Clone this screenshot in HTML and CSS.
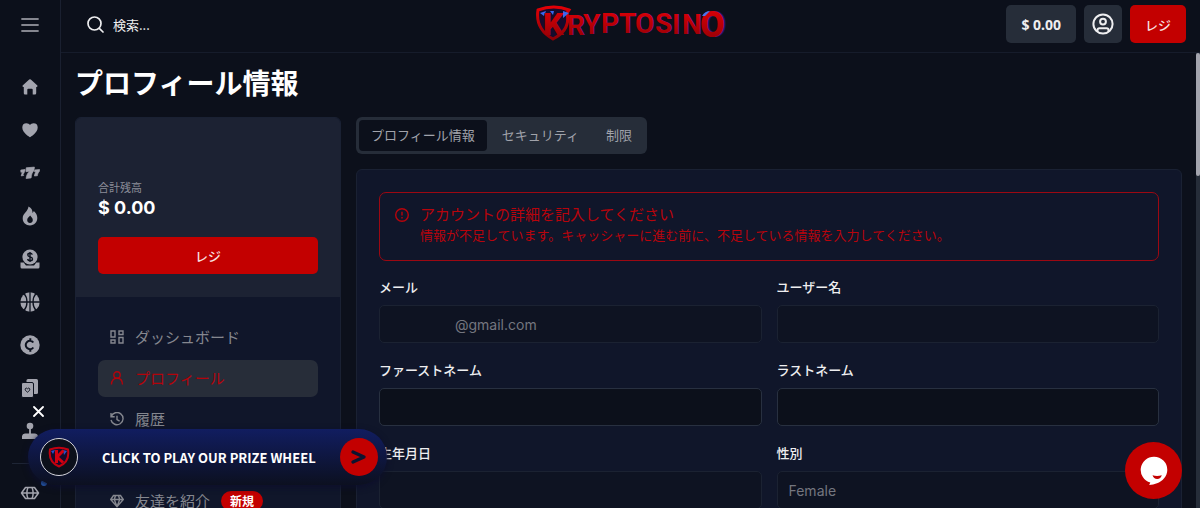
FILE: index.html
```html
<!DOCTYPE html>
<html lang="ja">
<head>
<meta charset="utf-8">
<meta name="viewport" content="width=device-width, initial-scale=1">
<title>プロフィール情報</title>
<link rel="stylesheet" href="styles.css">
</head>
<body>
<div class="app">
  <nav class="rail" aria-label="メニュー">
    <button class="rail-toggle" type="button" aria-label="メニュー">
      <svg width="18" height="16" viewBox="0 0 18 16"><path d="M1 2h16M1 8h16M1 14h16" stroke="currentColor" stroke-width="1.8" stroke-linecap="round"/></svg>
    </button>
    <ul class="rail-list">
      <li><a href="#" aria-label="ホーム"><svg width="20" height="20" viewBox="0 0 20 20"><path fill="currentColor" d="M10 2.200a1.200 1.200 0 0 1 .8.3l6.300 5.800c.8.8.4 1.600-.5 1.600h-.4v6.300a1.200 1.200 0 0 1-1.200 1.200h-2.300v-4.600a1 1 0 0 0-1-1H8.300a1 1 0 0 0-1 1v4.600H5a1.200 1.200 0 0 1-1.200-1.200V9.900h-.4c-.9 0-1.300-.8-.5-1.600l6.300-5.800a1.200 1.200 0 0 1 .8-.3z"/></svg></a></li>
      <li><a href="#" aria-label="お気に入り"><svg width="20" height="20" viewBox="0 0 20 20"><path fill="currentColor" d="M10 17.200c-.6 0-7.700-4.500-7.700-9.600A4.300 4.300 0 0 1 6.500 3.300c1.500 0 2.700.7 3.500 1.800.8-1.100 2-1.800 3.500-1.800a4.300 4.300 0 0 1 4.200 4.300c0 5.100-7.100 9.600-7.700 9.600z"/></svg></a></li>
      <li><a href="#" aria-label="スロット"><svg width="20" height="20" viewBox="0 0 20 20"><g fill="currentColor" stroke="currentColor" stroke-width=".7"><path d="M6.200 4.800l8.200-.7-.4 3.300c-2 2.200-2.600 4.200-2.900 7.500l-5 .6c.3-3.200 1.600-5.500 3.400-7.300l-3.500.5z"/><path d="M.8 7l4.300-.5-.3 1.800-1.700 3.200.6 1-2.500.4.700-2.500L2.700 9l-1.800.3z"/><path d="M14.800 6.900l4.800-.4-.3 2c-1.200 1.200-1.700 2.500-1.900 4.200l-3 .3c.2-1.800.8-3.100 1.700-4.200l-1.500.1z"/></g></svg></a></li>
      <li><a href="#" aria-label="人気"><svg width="20" height="20" viewBox="0 0 20 20"><path fill="currentColor" fill-rule="evenodd" d="M8.500.6c3 1.400 4.200 3.700 4 6.300.7-.5 1.100-1.200 1.300-2 2 1.600 3.500 4.300 3.500 7.200 0 4.200-3.200 7.400-7.300 7.400s-7.300-3-7.300-7c0-5.200 5.300-6.700 5.800-11.900zM10.200 9.600c-1.700 1.700-3 2.700-3 4.500a2.800 2.800 0 0 0 5.600 0c0-1.800-1.300-2.800-2.600-4.500z"/></svg></a></li>
      <li><a href="#" aria-label="ボーナス"><svg width="20" height="20" viewBox="0 0 20 20"><circle cx="10" cy="8" r="7.600" fill="currentColor"/><path d="M12.300 5.600c-.3-.9-1.200-1.300-2.300-1.300-1.300 0-2.200.7-2.200 1.700 0 2.500 4.700 1.200 4.700 3.900 0 1-1 1.800-2.400 1.800-1.300 0-2.300-.6-2.500-1.700M10 3v10" fill="none" stroke="#0c111e" stroke-width="1.400"/><path d="M.5 13.500h3.200l2.300 3h8l2.300-3h3.200v4.500a1.500 1.500 0 0 1-1.500 1.500H2A1.500 1.500 0 0 1 .5 18z" fill="currentColor"/></svg></a></li>
      <li><a href="#" aria-label="スポーツ"><svg width="20" height="20" viewBox="0 0 20 20"><circle cx="10" cy="10" r="9.700" fill="currentColor"/><path d="M10 0v20M0 10h20M4 1.500C8 6 8 14 4 18.500M16 1.500C12 6 12 14 16 18.500" fill="none" stroke="#0c111e" stroke-width="1.300"/></svg></a></li>
      <li><a href="#" aria-label="仮想通貨"><svg width="20" height="20" viewBox="0 0 20 20"><circle cx="10" cy="10" r="9.700" fill="currentColor"/><path d="M13.300 7.500A4.200 4.200 0 1 0 13.300 12.500M10.300 3.200v2.600M10.300 14.200v2.600" fill="none" stroke="#0c111e" stroke-width="2"/></svg></a></li>
      <li><a href="#" aria-label="カード"><svg width="20" height="20" viewBox="0 0 20 20"><rect x="6.500" y="1" width="11.500" height="15" rx="1.500" fill="currentColor"/><rect x="1.500" y="4.500" width="12" height="15" rx="1.500" fill="currentColor" stroke="#0c111e"/><path d="M7.500 14.200c-1.500-1-2.300-1.900-2.300-2.900 0-1.300 1.600-1.700 2.300-.5.700-1.200 2.300-.8 2.300.5 0 1-.8 1.900-2.300 2.900z" fill="none" stroke="#0c111e"/></svg></a></li>
      <li><a href="#" aria-label="ゲーム"><svg width="20" height="20" viewBox="0 0 20 20"><circle cx="10" cy="5" r="3.300" fill="currentColor"/><path d="M10 7v6" stroke="currentColor" stroke-width="1.800"/><path d="M2 18v-3a3 3 0 0 1 3-2.500h10a3 3 0 0 1 3 2.500v3z" fill="currentColor"/></svg></a></li>
    </ul>
    <hr class="rail-rule">
    <a class="rail-last" href="#" aria-label="スポーツベット"><svg width="20" height="14" viewBox="0 0 20 14"><path d="M5.500 1.500h9L18.500 7l-4 5.500h-9L1.500 7zM1.500 7h17M8 1.500C6.500 5 6.500 9 8 12.500M12 1.500c1.500 3.500 1.500 7.500 0 11" fill="none" stroke="currentColor" stroke-width="1.500" stroke-linejoin="round"/></svg></a>
  </nav>

  <div class="page">
    <header class="topbar">
      <button class="search" type="button">
        <svg width="17" height="17" viewBox="0 0 17 17"><circle cx="7.500" cy="7.500" r="6.500" fill="none" stroke="currentColor" stroke-width="1.700"/><path d="M12.300 12.300L16 16" stroke="currentColor" stroke-width="1.700" stroke-linecap="round"/></svg>
        <span>検索...</span>
      </button>
      <a class="logo" href="#" aria-label="Kryptosino">
        <svg width="196" height="40" viewBox="-2 -1 196 40">
          <defs>
            <linearGradient id="red" x1="0" y1="0" x2="0" y2="1"><stop offset="0" stop-color="#e30006"/><stop offset="1" stop-color="#8c0006"/></linearGradient>
          </defs>
          <path d="M3 5Q19-1 34 5l-2 3Q36 25 18 34 0 24 3 5z" fill="#160b2c" stroke="url(#red)" stroke-width="3"/>
          <path d="M5 8l6-2-2 5zM15 6h4l-1 4zM28 6l6 2-6 5z" fill="#3868ee"/>
          <g class="logo-shade">
            <text class="logo-text" x="33 49 67 85 101 121 138 148" y="30 29 28 28 28 28 29 29">RYPTOSIN</text>
            <text class="logo-end" x="167" y="32">O</text>
          </g>
          <text class="logo-k" x="8" y="30" fill="url(#red)">K</text>
          <text class="logo-text" x="32 48 66 84 100 120 137 147" y="30 29 28 28 28 28 29 29" fill="url(#red)">RYPTOSIN</text>
          <text class="logo-end" x="165" y="32" fill="url(#red)">O</text>
          <path d="M167 11q3-5 8-5l-5 5z" fill="#4b74ee"/>
        </svg>
      </a>
      <div class="actions">
        <button class="chip" type="button">$ 0.00</button>
        <button class="chip chip-icon" type="button" aria-label="アカウント">
          <svg width="22" height="22" viewBox="0 0 22 22" fill="none" stroke="currentColor" stroke-width="2"><circle cx="11" cy="11" r="9.600"/><circle cx="11" cy="8.600" r="2.900"/><path d="M5.500 18.300v-1.300c0-1 .8-1.800 1.800-1.800h7.400c1 0 1.800.8 1.800 1.800v1.300"/></svg>
        </button>
        <button class="chip chip-red" type="button">レジ</button>
      </div>
    </header>

    <div class="body">
      <main class="main">
        <h1 class="title">プロフィール情報</h1>
        <div class="columns">
          <aside class="account">
            <section class="balance">
              <span class="balance-label">合計残高</span>
              <strong class="balance-value">$ 0.00</strong>
              <button class="cashier" type="button">レジ</button>
            </section>
            <nav class="menu" aria-label="アカウント">
              <a class="menu-item" href="#">
                <svg class="menu-icon" viewBox="0 0 14 14"><path d="M1 1h4v6H1zM9 1h4v3.500H9zM1 10h4v3H1zM9 7.500h4V13H9z"/></svg>
                ダッシュボード</a>
              <a class="menu-item menu-active" href="#" aria-current="page">
                <svg class="menu-icon" viewBox="0 0 14 14"><circle cx="7" cy="4" r="3.200"/><path d="M1.500 13.500C1.500 9 4 7.200 7 7.200s5.500 1.800 5.500 6.300"/></svg>
                プロフィール</a>
              <a class="menu-item" href="#">
                <svg class="menu-icon" viewBox="0 0 14 14"><path d="M1.200 4.500A6.100 6.100 0 1 1 1 8M1 1v3.700h3.700M7 3.800V7.500l2.600 1.600"/></svg>
                履歴</a>
              <a class="menu-item menu-referral" href="#">
                <svg class="menu-icon" viewBox="0 0 14 14"><path d="M3.500 1.500h7L13.300 5.500 7 12.800.7 5.500zM.7 5.500h12.600M7 12.800L4.300 5.500 5.500 1.500M7 12.800l2.700-7.300-1.200-4"/></svg>
                友達を紹介 <span class="badge">新規</span></a>
            </nav>
          </aside>

          <div class="content">
            <div class="tabs" role="tablist">
              <button class="tab tab-active" type="button" role="tab" aria-selected="true">プロフィール情報</button>
              <button class="tab" type="button" role="tab">セキュリティ</button>
              <button class="tab" type="button" role="tab">制限</button>
            </div>
            <form class="panel">
              <div class="alert" role="alert">
                <svg class="alert-icon" width="16" height="16" viewBox="0 0 16 16"><circle cx="8" cy="8" r="6.300" fill="none" stroke="currentColor" stroke-width="1.400"/><path d="M8 4.800v3.700M8 10.100v1.300" stroke="currentColor" stroke-width="1.400"/></svg>
                <div>
                  <p class="alert-title">アカウントの詳細を記入してください</p>
                  <p class="alert-text">情報が不足しています。キャッシャーに進む前に、不足している情報を入力してください。</p>
                </div>
              </div>
              <div class="fields">
                <div class="field"><label for="email">メール</label><input class="control control-email" id="email" type="text" value="@gmail.com" disabled></div>
                <div class="field"><label for="user">ユーザー名</label><input class="control" id="user" type="text" disabled></div>
                <div class="field"><label for="first">ファーストネーム</label><input class="control" id="first" type="text"></div>
                <div class="field"><label for="last">ラストネーム</label><input class="control" id="last" type="text"></div>
                <div class="field"><label for="birth">生年月日</label><input class="control" id="birth" type="text" disabled></div>
                <div class="field"><label for="gender">性別</label><select class="control" id="gender" disabled><option>Female</option></select></div>
              </div>
            </form>
          </div>
        </div>
      </main>
      <div class="track"><div class="thumb"></div></div>
    </div>
  </div>

  <button class="promo-close" type="button" aria-label="閉じる"><svg width="11" height="11" viewBox="0 0 11 11"><path d="M1 1l9 9M10 1l-9 9" stroke="currentColor" stroke-width="1.800" stroke-linecap="round"/></svg></button>
  <span class="dot"></span>
  <a class="promo" href="#">
    <span class="promo-logo"><svg width="22" height="22" viewBox="0 0 22 22"><path d="M2 3.500q9-3.500 18 0Q22 16 11 20.500 0 16 2 3.500z" fill="#160b2c" stroke="#c30010" stroke-width="2"/><path d="M3 5l4-1-2 4zM15 4l4 1-3 4z" fill="#2850c8"/><path d="M8.500 4v13M15.500 4.500L9 11l6 5.500" fill="none" stroke="#d40010" stroke-width="3"/></svg></span>
    <span class="promo-text">CLICK TO PLAY OUR PRIZE WHEEL</span>
    <span class="promo-go"><svg width="16" height="16" viewBox="0 0 16 16"><path d="M2 3l11 5-11 5" fill="none" stroke="#0c1430" stroke-width="3.200" stroke-linecap="round" stroke-linejoin="round"/></svg></span>
  </a>
  <button class="chat" type="button" aria-label="チャット"><svg width="28" height="30" viewBox="0 0 28 30"><path d="M14 .7a13.200 13.200 0 0 1 13.300 13.200c0 6.500-5 11.400-10.300 13.300-2.600 1-5.200 1.500-7.800 1.800l1.100-2.400A13.200 13.200 0 0 1 14 .7z" fill="#fff"/><path d="M12.500 19.300q4.500 1.300 9.300 0-1 3.600-4.600 3.600t-4.700-3.600z" fill="#c30000"/></svg></button>
</div>
</body>
</html>
```
FILE: styles.css
```css
* { box-sizing: border-box; }

body {
  margin: 0;
  background: #0c101b;
  color: #eeeef0;
  font-family: "Noto Sans CJK JP", "Noto Sans", sans-serif;
  font-size: 13px;
}

button, input, select { font: inherit; color: inherit; }
button { border: 0; padding: 0; background: none; cursor: pointer; }
a { color: inherit; text-decoration: none; }
svg { display: block; flex: none; }
p, h1, ul { margin: 0; padding: 0; }

.app { display: flex; height: 100vh; overflow: hidden; position: relative; }

/* Icon rail */
.rail {
  flex: none;
  width: 61px;
  border-right: 1px solid #1a2030;
  color: #a3a4ae;
  display: flex;
  flex-direction: column;
  align-items: center;
}
.rail-toggle { flex: none; height: 49px; color: #85868f; }
.rail-list { list-style: none; display: grid; gap: 23px; padding-top: 28px; }
.rail-rule { flex: none; width: 36px; margin: 22px 0; border: 0; border-top: 1px solid #1e2535; }

/* Top bar */
.page { flex: 1; min-width: 0; display: flex; flex-direction: column; }
.topbar {
  flex: none;
  display: grid;
  grid-template-columns: 1fr auto 1fr;
  align-items: center;
  height: 53px;
  padding: 0 14px 4px;
  border-bottom: 1px solid #161c2b;
}
.search { display: flex; align-items: center; gap: 9px; justify-self: start; padding-left: 12px; }
.logo-text { font: 700 28px Roboto, sans-serif; }
.logo-k { font: 900 32px Roboto, sans-serif; }
.logo-end { font: 900 36px Roboto, sans-serif; }
.logo-shade { fill: #1c1670; }
.actions { display: flex; gap: 8px; justify-self: end; }
.chip {
  height: 38px;
  padding: 0 15px;
  border-radius: 5px;
  background: #262d39;
  font-family: "Noto Sans", "Noto Sans CJK JP", sans-serif;
  font-size: 14px;
  font-weight: 700;
}
.chip-icon { padding: 0 8px; }
.chip-red, .cashier { background: #c30000; color: #f6dede; font-size: 13px; font-weight: 500; }

/* Page body */
.body { flex: 1; min-height: 0; display: flex; }
.main { flex: 1; min-width: 0; padding: 9px 14px 24px; overflow: hidden; }
.track { flex: none; width: 4px; background: #262d39; }
.thumb { height: 27%; border-radius: 2px; background: #a3a4ae; }
.title { font-size: 28px; line-height: 40px; font-weight: 700; color: #fff; }
.columns {
  display: grid;
  grid-template-columns: 266px minmax(0, 1fr);
  gap: 15px;
  margin-top: 15px;
  align-items: start;
}

.account { border: 1px solid #1a2133; border-radius: 6px; background: #10162a; overflow: hidden; }
.balance { display: flex; flex-direction: column; padding: 61px 22px 23px; background: #1c2233; }
.balance-label { font-size: 11px; line-height: 16px; color: #8b8d98; }
.balance-value { margin-bottom: 16px; font: 700 18px/26px Inter, sans-serif; color: #fff; }
.cashier { height: 37px; border-radius: 5px; }

.menu { display: grid; gap: 4px; padding: 22px; color: #85878f; }
.menu-item {
  display: flex;
  align-items: center;
  gap: 11px;
  height: 37px;
  padding: 0 12px 2px;
  border-radius: 7px;
  font-size: 15px;
  font-weight: 400;
}
.menu-active { background: #272d39; color: #b3040c; }
.menu-referral { margin-top: 41px; }
.menu-icon { width: 14px; height: 14px; fill: none; stroke: currentColor; stroke-width: 1.4; }
.badge {
  padding: 0 9px;
  border-radius: 10px;
  background: #c30000;
  color: #fff;
  font-size: 12px;
  line-height: 20px;
  font-weight: 700;
}

.tabs { display: inline-flex; gap: 3px; padding: 3px; border-radius: 6px; background: #262d39; }
.tab { height: 31px; padding: 0 12px 2px; border-radius: 4px; color: #a1a3ab; font-weight: 400; }
.tab-active { background: #0c101b; }

.content { display: flex; flex-direction: column; align-items: flex-start; gap: 15px; }
.panel { width: 100%; padding: 22px; border: 1px solid #1a2133; border-radius: 6px; background: #10162a; }
.alert {
  display: flex;
  gap: 10px;
  padding: 10px 14px 15px;
  border: 1px solid #9c0812;
  border-radius: 7px;
  color: #b8040c;
}
.alert-icon { margin-top: 4px; }
.alert-title { font-size: 15px; line-height: 22px; }
.alert-text { line-height: 20px; }

.fields {
  display: grid;
  grid-template-columns: repeat(2, minmax(0, 1fr));
  gap: 17px 15px;
  margin-top: 16px;
}
.field { display: grid; gap: 8px; }
.field label { line-height: 20px; font-weight: 500; }
.control {
  appearance: none;
  width: 100%;
  height: 38px;
  padding: 0 11px;
  border: 1px solid #283040;
  border-radius: 5px;
  background: #0c101b;
  font-family: Inter, sans-serif;
  font-size: 14px;
}
.control:disabled { background: #0e1322; border-color: #1b2232; color: #74767f; opacity: 1; }
.control-email { padding-left: 75px; }

/* Floating layer */
.promo-close { position: absolute; left: 33px; bottom: 91px; color: #fff; }
.dot { position: absolute; left: 41px; bottom: 22px; width: 6px; height: 6px; border-radius: 50%; background: #2c6fd0; }
.promo {
  position: absolute;
  left: 28px;
  bottom: 23px;
  display: flex;
  align-items: center;
  gap: 24px;
  height: 56px;
  padding: 0 9px 0 12px;
  border-radius: 28px;
  background: linear-gradient(#111d60, #0c1020);
  box-shadow: 0 2px 6px #0c0e2c;
}
.promo-logo, .promo-go { display: grid; place-items: center; width: 38px; height: 38px; border-radius: 50%; }
.promo-logo { border: 1px solid #d5d5dc; background: #0c101b; }
.promo-go { background: #c30000; }
.promo-text { font-size: 13px; font-weight: 700; color: #fff; white-space: nowrap; }
.chat {
  position: absolute;
  right: 18px;
  bottom: 9px;
  display: grid;
  place-items: center;
  width: 57px;
  height: 57px;
  border-radius: 50%;
  background: #c30000;
}
```
